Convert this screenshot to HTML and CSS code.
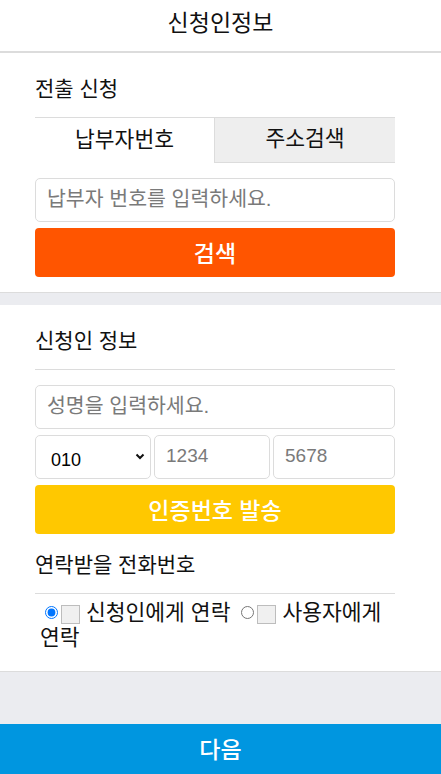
FILE: index.html
```html
<!DOCTYPE html>
<html lang="ko">
<head>
<meta charset="utf-8">
<title>신청인정보</title>
<link rel="stylesheet" href="styles.css">
</head>
<body>
<header class="topbar">신청인정보</header>

<section class="panel panel-first">
  <h2 class="panel-title">전출 신청</h2>
  <div class="tabs">
    <div class="tab tab-active">납부자번호</div>
    <div class="tab tab-idle">주소검색</div>
  </div>
  <input class="field field-ko field-gap" type="text" placeholder="납부자 번호를 입력하세요.">
  <button class="btn btn-orange" type="button">검색</button>
</section>

<section class="panel panel-second">
  <h2 class="panel-title panel-title-line">신청인 정보</h2>
  <input class="field field-ko field-gap" type="text" placeholder="성명을 입력하세요.">
  <div class="phone-row">
    <div class="select-wrap">
      <select class="select">
        <option>010</option>
        <option>011</option>
      </select>
      <svg class="chev" width="10" height="7" viewBox="0 0 10 7"><path d="M1.5 1.5 L5 5 L8.5 1.5" fill="none" stroke="#111" stroke-width="2"/></svg>
    </div>
    <input class="field" type="text" placeholder="1234">
    <input class="field" type="text" placeholder="5678">
  </div>
  <button class="btn btn-yellow" type="button">인증번호 발송</button>

  <h2 class="panel-title panel-title-line panel-title-sub">연락받을 전화번호</h2>
  <p class="radios"><label class="opt"><input type="radio" name="who" checked><span class="box"></span> 신청인에게 연락</label> <label class="opt"><input type="radio" name="who"><span class="box"></span> 사용자에게 연락</label></p>
</section>

<button class="next" type="button">다음</button>
</body>
</html>
```

FILE: styles.css
```css
* { box-sizing: border-box; }

html, body {
  margin: 0;
  padding: 0;
}

body {
  background: #ebecf0;
  font-family: "Liberation Sans", "Noto Sans CJK KR", sans-serif;
  color: #111;
  min-height: 774px;
}

.topbar {
  height: 53px;
  background: #fff;
  border-bottom: 2px solid #dcdcdc;
  display: flex;
  align-items: center;
  justify-content: center;
  padding-bottom: 5px;
  font-size: 23px;
  line-height: 30px;
}

.panel {
  background: #fff;
  padding: 0 46px 0 35px;
}

.panel-first {
  padding-bottom: 15px;
  border-bottom: 1px solid #dcdcdc;
}

.panel-second {
  margin-top: 12px;
  padding-bottom: 20px;
  border-bottom: 1px solid #dcdcdc;
}

.panel-title {
  margin: 0;
  padding: 24px 0 16px;
  font-size: 21px;
  line-height: 24px;
  font-weight: 400;
}

.panel-title-line {
  border-bottom: 1px solid #dcdcdc;
}

.panel-title-sub {
  padding-top: 19px;
}

.tabs {
  display: grid;
  grid-template-columns: 179px 1fr;
  height: 46px;
  border-top: 1px solid #dcdcdc;
}

.tab {
  display: flex;
  align-items: center;
  justify-content: center;
  font-size: 21.5px;
  line-height: 26px;
  padding-bottom: 2px;
}

.tab-idle {
  background: #eeeeee;
  border-left: 1px solid #dcdcdc;
  border-bottom: 1px solid #dcdcdc;
}

.field {
  display: block;
  width: 100%;
  height: 44px;
  border: 1px solid #dcdcdc;
  border-radius: 5px;
  background: #fff;
  padding: 0 0 2px 11px;
  font-family: inherit;
  font-size: 19px;
  color: #111;
  outline: none;
}

.field-ko {
  font-size: 20.5px;
}

.field::placeholder {
  color: #7a7a7a;
}

.field-gap {
  margin-top: 15px;
}

.btn {
  display: block;
  width: 100%;
  height: 49px;
  margin-top: 6px;
  border: 0;
  border-radius: 4px;
  color: #fff;
  font-family: inherit;
  font-size: 23px;
  font-weight: 500;
  padding: 0 0 2px;
}

.btn-orange { background: #ff5500; }
.btn-yellow { background: #ffc800; }

.phone-row {
  display: grid;
  grid-template-columns: 116px 116px 1fr;
  gap: 3px;
  margin-top: 6px;
}

.select-wrap {
  position: relative;
}

.select {
  display: block;
  width: 100%;
  height: 44px;
  border: 1px solid #dcdcdc;
  border-radius: 5px;
  background: #fff;
  appearance: none;
  -webkit-appearance: none;
  padding: 6px 0 0 15px;
  font-family: inherit;
  font-size: 18px;
  color: #000;
}

.chev {
  position: absolute;
  right: 6px;
  top: 18px;
}

.radios {
  margin: 0;
  padding: 7px 0 0 5px;
  font-size: 21.5px;
  line-height: 25px;
  word-break: keep-all;
}

.opt input {
  margin: 0 3px 0 5px;
  width: 13px;
  height: 13px;
  vertical-align: 1px;
}

.opt .box {
  display: inline-block;
  width: 19px;
  height: 19px;
  background: #f0f0f0;
  border: 1px solid #bdbdbd;
  vertical-align: -4px;
}

.next {
  position: fixed;
  left: 0;
  right: 0;
  bottom: 0;
  height: 50px;
  border: 0;
  background: #0096e0;
  color: #fff;
  font-family: inherit;
  font-size: 23px;
  font-weight: 500;
  padding: 0 0 2px;
}
```
